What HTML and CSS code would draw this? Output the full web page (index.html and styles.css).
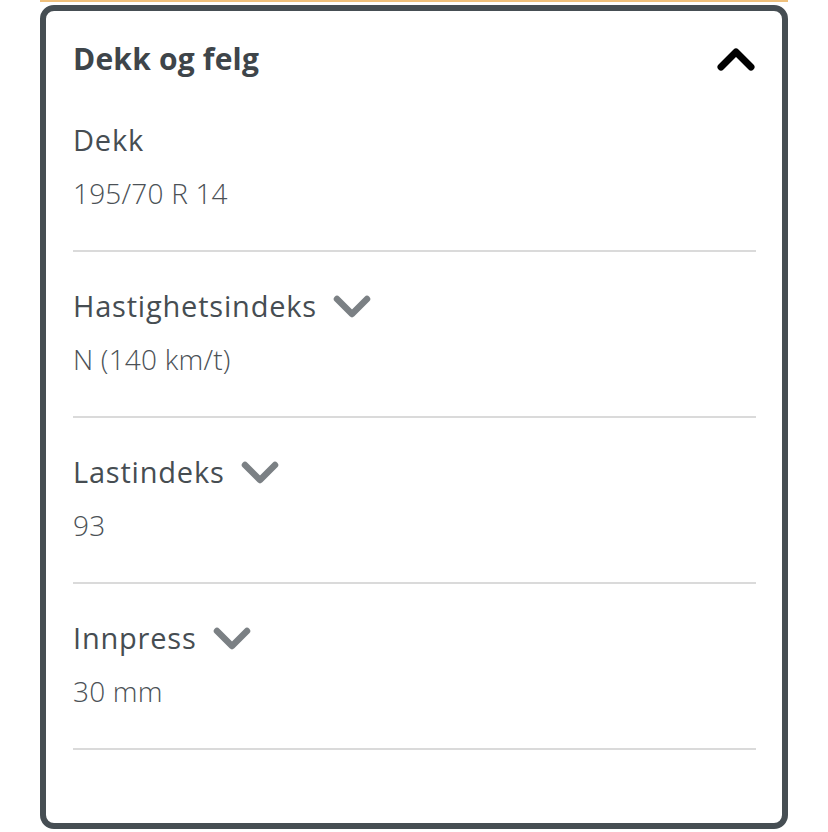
FILE: index.html
```html
<!DOCTYPE html>
<html lang="no">
<head>
<meta charset="utf-8">
<title>Dekk og felg</title>
<link rel="stylesheet" href="styles.css">
</head>
<body>
<div class="topline"></div>
<section class="card">
  <header class="card-head">
    <h2 class="card-title">Dekk og felg</h2>
    <svg class="chev-up" width="38" height="23" viewBox="0 0 38 23" aria-hidden="true">
      <polyline points="4,19 19,4 34,19" fill="none" stroke="#000" stroke-width="7" stroke-linecap="round" stroke-linejoin="round"/>
    </svg>
  </header>
  <dl class="specs">
    <div class="spec">
      <dt class="spec-label">Dekk</dt>
      <dd class="spec-value">195/70 R 14</dd>
    </div>
    <div class="spec">
      <dt class="spec-label">Hastighetsindeks
        <svg class="chev-down" width="38" height="23" viewBox="0 0 38 23" aria-hidden="true">
          <polyline points="4,4 19,19 34,4" fill="none" stroke="#7b8084" stroke-width="6.5" stroke-linecap="round" stroke-linejoin="round"/>
        </svg>
      </dt>
      <dd class="spec-value">N (140 km/t)</dd>
    </div>
    <div class="spec">
      <dt class="spec-label">Lastindeks
        <svg class="chev-down" width="38" height="23" viewBox="0 0 38 23" aria-hidden="true">
          <polyline points="4,4 19,19 34,4" fill="none" stroke="#7b8084" stroke-width="6.5" stroke-linecap="round" stroke-linejoin="round"/>
        </svg>
      </dt>
      <dd class="spec-value">93</dd>
    </div>
    <div class="spec">
      <dt class="spec-label">Innpress
        <svg class="chev-down" width="38" height="23" viewBox="0 0 38 23" aria-hidden="true">
          <polyline points="4,4 19,19 34,4" fill="none" stroke="#7b8084" stroke-width="6.5" stroke-linecap="round" stroke-linejoin="round"/>
        </svg>
      </dt>
      <dd class="spec-value">30 mm</dd>
    </div>
  </dl>
</section>
</body>
</html>
```

FILE: styles.css
```css
html, body {
  margin: 0;
  padding: 0;
  background: #ffffff;
}

body {
  font-family: "Open Sans", Lato, "Liberation Sans", sans-serif;
  color: #464d52;
}

/* thin accent edge of the block above */
.topline {
  height: 2px;
  margin: 0 40px;
  background: #efc07c;
}

.card {
  margin: 3px 40px 0;
  border: 6px solid #464e53;
  border-radius: 14px;
  padding: 30px 26px 73px 27px;
  height: 824px;
  box-sizing: border-box;
}

.card-head {
  display: flex;
  justify-content: space-between;
  align-items: center;
}

.card-title {
  margin: 0;
  font-size: 30px;
  line-height: 36px;
  font-weight: 700;
  letter-spacing: 0.2px;
  color: #3e454a;
}

.chev-up {
  display: block;
  margin-right: 1px;
}

.specs {
  margin: 0;
  padding: 0;
}

.spec {
  padding: 36px 0 39px;
  border-bottom: 2px solid #dadada;
}

.spec:first-child {
  padding-top: 45px;
}

.spec-label {
  display: flex;
  align-items: center;
  gap: 16px;
  margin: 0;
  font-size: 29px;
  line-height: 36px;
  font-weight: 400;
  letter-spacing: 0.8px;
  color: #464d52;
}

.chev-down {
  display: block;
  flex: none;
}

.spec-value {
  margin: 17px 0 0;
  font-size: 28px;
  line-height: 36px;
  font-weight: 300;
  letter-spacing: 0.2px;
  color: #4b5156;
}
```
